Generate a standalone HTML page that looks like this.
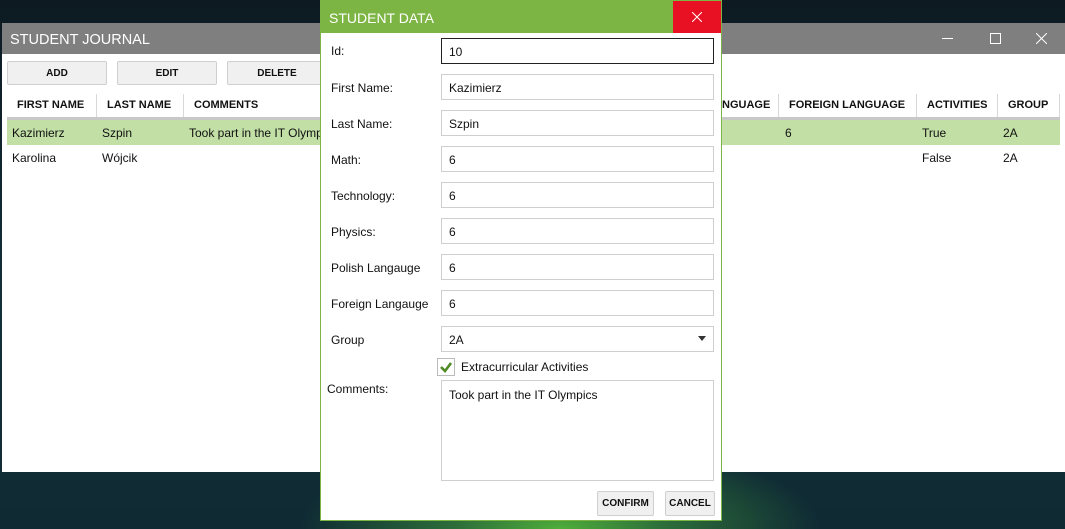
<!DOCTYPE html>
<html><head><meta charset="utf-8"><style>
*{box-sizing:border-box;margin:0;padding:0}
body{width:1065px;height:529px;overflow:hidden;position:relative;font-family:"Liberation Sans",sans-serif;font-size:12px;color:#111;
background:radial-gradient(ellipse 260px 90px at 560px 529px,#4fae3a 0%,#2c6e3a 40%,transparent 100%),linear-gradient(180deg,#0d1a22 0%,#12303a 60%,#0f2a33 100%)}
.a{position:absolute}
.main{left:2px;top:23px;width:1063px;height:449px;background:#fff}
.tb{left:0;top:0;width:100%;height:31px;background:#7f7f7f;color:#fff;font-size:14.5px;padding:9px 0 0 8px}
.btn{background:#f0f0f0;border:1px solid #cfcfcf;border-radius:2px;font-weight:bold;font-size:10px;display:flex;align-items:center;justify-content:center}
.hd{font-size:11px;font-weight:bold;top:99px}
.vd{width:1px;height:23px;top:94px;background:#d8d8d8}
.dlg{left:320px;top:0;width:402px;height:521px;background:#fff;border:1px solid #7db544}
.dt{left:0;top:0;width:400px;height:32px;background:#7db544;color:#fff;font-size:14px;padding:9px 0 0 8px}
.lbl{left:10px}
.in{left:120px;width:273px;height:26px;border:1px solid #cfcfcf;padding:6px 0 0 7px}
</style></head><body>
<div class="a main">
 <div class="a tb">STUDENT JOURNAL</div>
 <div class="a" style="left:940px;top:15px;width:11px;height:1px;background:#fff"></div>
 <div class="a" style="left:988px;top:10px;width:11px;height:11px;border:1px solid #fff"></div>
 <svg class="a" style="left:1034px;top:10px" width="11" height="11"><path d="M0 0L11 11M11 0L0 11" stroke="#fff" stroke-width="1"/></svg>
 <div class="a btn" style="left:5px;top:38px;width:100px;height:24px">ADD</div>
 <div class="a btn" style="left:115px;top:38px;width:100px;height:24px">EDIT</div>
 <div class="a btn" style="left:225px;top:38px;width:100px;height:24px">DELETE</div>
</div>
<div class="a" style="left:7px;top:117px;width:1053px;height:3px;background:#c8c8c8"></div>
<div class="a hd" style="left:17px">FIRST NAME</div>
<div class="a vd" style="left:96px"></div>
<div class="a hd" style="left:107px">LAST NAME</div>
<div class="a vd" style="left:183px"></div>
<div class="a hd" style="left:194px">COMMENTS</div>
<div class="a hd" style="left:722px">NGUAGE</div>
<div class="a vd" style="left:778px"></div>
<div class="a hd" style="left:789px">FOREIGN LANGUAGE</div>
<div class="a vd" style="left:916px"></div>
<div class="a hd" style="left:927px">ACTIVITIES</div>
<div class="a vd" style="left:997px"></div>
<div class="a hd" style="left:1008px">GROUP</div>
<div class="a vd" style="left:1059px"></div>
<div class="a" style="left:7px;top:120px;width:1053px;height:25px;background:#c2dfa6"></div>
<div class="a" style="left:12px;top:126px">Kazimierz</div>
<div class="a" style="left:102px;top:126px">Szpin</div>
<div class="a" style="left:189px;top:126px">Took part in the IT Olympics</div>
<div class="a" style="left:785px;top:126px">6</div>
<div class="a" style="left:922px;top:126px">True</div>
<div class="a" style="left:1003px;top:126px">2A</div>
<div class="a" style="left:12px;top:151px">Karolina</div>
<div class="a" style="left:102px;top:151px">Wójcik</div>
<div class="a" style="left:922px;top:151px">False</div>
<div class="a" style="left:1003px;top:151px">2A</div>

<div class="a dlg">
 <div class="a dt">STUDENT DATA</div>
 <div class="a" style="left:352px;top:0;width:48px;height:32px;background:#e81123"></div>
 <svg class="a" style="left:371px;top:11px" width="10" height="10"><path d="M0 0L10 10M10 0L0 10" stroke="#fff" stroke-width="1"/></svg>
 <div class="a lbl" style="top:43px">Id:</div><div class="a in" style="top:37px;border:1px solid #222">10</div>
 <div class="a lbl" style="top:80px">First Name:</div><div class="a in" style="top:73px">Kazimierz</div>
 <div class="a lbl" style="top:116px">Last Name:</div><div class="a in" style="top:109px">Szpin</div>
 <div class="a lbl" style="top:152px">Math:</div><div class="a in" style="top:145px">6</div>
 <div class="a lbl" style="top:188px">Technology:</div><div class="a in" style="top:181px">6</div>
 <div class="a lbl" style="top:224px">Physics:</div><div class="a in" style="top:217px">6</div>
 <div class="a lbl" style="top:260px">Polish Langauge</div><div class="a in" style="top:253px">6</div>
 <div class="a lbl" style="top:296px">Foreign Langauge</div><div class="a in" style="top:289px">6</div>
 <div class="a lbl" style="top:332px">Group</div><div class="a in" style="top:325px">2A</div>
 <div class="a" style="left:377px;top:335px;width:0;height:0;border-left:4px solid transparent;border-right:4px solid transparent;border-top:5px solid #333"></div>
 <div class="a" style="left:116px;top:357px;width:18px;height:18px;border:1px solid #bbb"></div>
 <svg class="a" style="left:118px;top:359px" width="14" height="14"><path d="M2 7 L6 11 L12 3" stroke="#4f8a25" stroke-width="2.6" fill="none"/></svg>
 <div class="a" style="left:140px;top:359px">Extracurricular Activities</div>
 <div class="a" style="left:6px;top:381px">Comments:</div>
 <div class="a in" style="top:379px;height:101px;padding-top:7px">Took part in the IT Olympics</div>
 <div class="a btn" style="left:276px;top:490px;width:57px;height:25px">CONFIRM</div>
 <div class="a btn" style="left:344px;top:490px;width:50px;height:25px">CANCEL</div>
</div>
</body></html>
